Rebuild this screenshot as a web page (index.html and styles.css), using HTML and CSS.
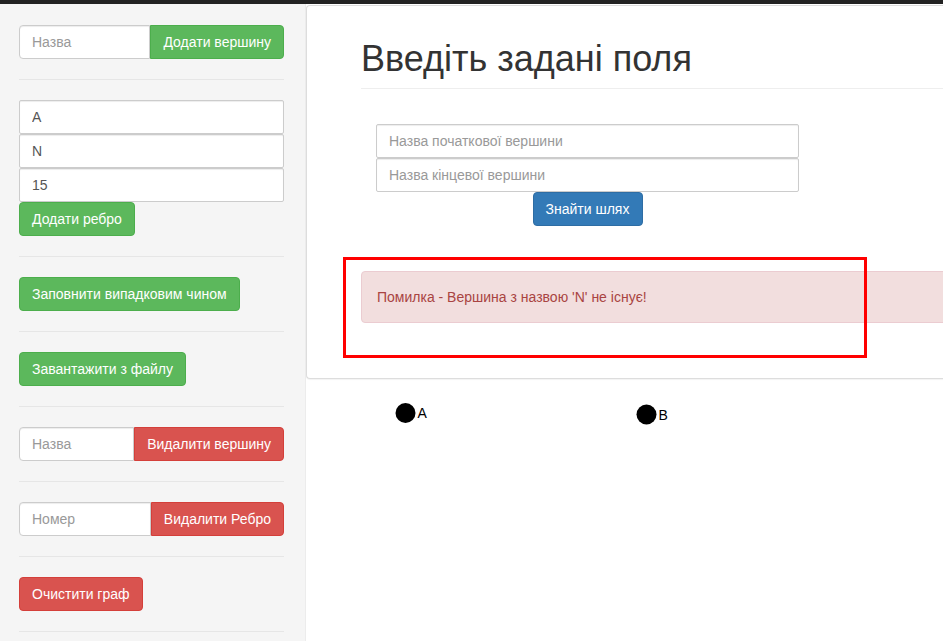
FILE: index.html
```html
<!DOCTYPE html>
<html lang="uk">
<head>
<meta charset="utf-8">
<title>Граф</title>
<link rel="stylesheet" href="styles.css">
</head>
<body>
<div class="topbar"></div>
<div class="layout">
  <aside class="sidebar">
    <div class="input-group">
      <input class="form-control" type="text" placeholder="Назва">
      <button class="btn btn-success">Додати вершину</button>
    </div>
    <hr class="divider">
    <div class="stack">
      <input class="form-control" type="text" value="A">
      <input class="form-control" type="text" value="N">
      <input class="form-control" type="text" value="15">
    </div>
    <button class="btn btn-success">Додати ребро</button>
    <hr class="divider">
    <button class="btn btn-success">Заповнити випадковим чином</button>
    <hr class="divider">
    <button class="btn btn-success">Завантажити з файлу</button>
    <hr class="divider">
    <div class="input-group">
      <input class="form-control" type="text" placeholder="Назва">
      <button class="btn btn-danger">Видалити вершину</button>
    </div>
    <hr class="divider">
    <div class="input-group">
      <input class="form-control" type="text" placeholder="Номер">
      <button class="btn btn-danger">Видалити Ребро</button>
    </div>
    <hr class="divider">
    <button class="btn btn-danger">Очистити граф</button>
    <hr class="divider">
  </aside>
  <main class="main">
    <section class="panel">
      <h1 class="page-title">Введіть задані поля</h1>
      <form class="path-form">
        <input class="form-control" type="text" placeholder="Назва початкової вершини">
        <input class="form-control" type="text" placeholder="Назва кінцевої вершини">
        <button class="btn btn-primary" type="button">Знайти шлях</button>
      </form>
      <div class="alert">Помилка - Вершина з назвою 'N' не існує!</div>
    </section>
    <svg class="graph" width="637" height="262" viewBox="0 0 637 262">
      <circle cx="99.5" cy="34" r="10" fill="#000"/>
      <text x="111.5" y="39" class="node-label">A</text>
      <circle cx="340.5" cy="35.5" r="10" fill="#000"/>
      <text x="352.5" y="41" class="node-label">B</text>
    </svg>
  </main>
</div>
<div class="highlight"></div>
</body>
</html>
```

FILE: styles.css
```css
* { box-sizing: border-box; }

html, body {
  margin: 0;
  height: 100%;
  overflow: hidden;
}

body {
  font-family: "Liberation Sans", Arial, sans-serif;
  font-size: 14px;
  line-height: 20px;
  color: #333;
  background: #fff;
  position: relative;
}

.topbar {
  height: 4px;
  background: #222;
}

.layout {
  display: flex;
  height: calc(100% - 4px);
}

.sidebar {
  width: 306px;
  flex: 0 0 306px;
  background: #f5f5f5;
  border-right: 1px solid #ececec;
  padding: 21px 21px 0 19px;
  display: flex;
  flex-direction: column;
  align-items: flex-start;
}

.divider {
  align-self: stretch;
  height: 0;
  border: 0;
  border-top: 1px solid #e6e6e6;
  margin: 20px 0;
}

.form-control {
  display: block;
  height: 34px;
  padding: 6px 12px;
  font-family: inherit;
  font-size: 14px;
  line-height: 20px;
  color: #555;
  background: #fff;
  border: 1px solid #ccc;
  border-radius: 4px;
  box-shadow: inset 0 1px 1px rgba(0, 0, 0, .075);
  margin: 0;
}

.form-control::placeholder { color: #999; }

.btn {
  display: inline-block;
  height: 34px;
  padding: 6px 12px;
  font-family: inherit;
  font-size: 14px;
  line-height: 20px;
  color: #fff;
  border: 1px solid transparent;
  border-radius: 4px;
  white-space: nowrap;
  cursor: pointer;
  margin: 0;
}

.btn-success { background: #5cb85c; border-color: #4cae4c; }
.btn-danger { background: #d9534f; border-color: #d43f3a; }
.btn-primary { background: #337ab7; border-color: #2e6da4; }

.input-group {
  align-self: stretch;
  display: flex;
}

.input-group .form-control {
  flex: 1 1 auto;
  min-width: 0;
  border-radius: 4px 0 0 4px;
}

.input-group .btn {
  flex: 0 0 auto;
  border-radius: 0 4px 4px 0;
}

.stack {
  align-self: stretch;
  display: flex;
  flex-direction: column;
}

.stack .form-control {
  width: 100%;
  border-radius: 2px;
}

.main {
  flex: 1 1 auto;
  min-width: 0;
  overflow: hidden;
  display: flex;
  flex-direction: column;
}

.panel {
  width: 760px;
  margin-top: 1px;
  background: #fff;
  border: 1px solid #ddd;
  border-right: 0;
  border-radius: 4px 0 0 4px;
  box-shadow: 0 1px 1px rgba(0, 0, 0, .05);
  padding: 0 0 55px 54px;
}

.page-title {
  margin: 33px 0 0;
  font-size: 36px;
  line-height: 40px;
  font-weight: 500;
  color: #333;
  padding-bottom: 9px;
  border-bottom: 1px solid #eee;
}

.path-form {
  margin: 35px 0 0 15px;
  width: 423px;
  display: flex;
  flex-direction: column;
  align-items: center;
}

.path-form .form-control {
  width: 100%;
  border-radius: 2px;
}

.path-form .btn {
  width: 110px;
}

.alert {
  margin-top: 45px;
  padding: 15px;
  background: #f2dede;
  border: 1px solid #ebccd1;
  border-radius: 4px;
  color: #a94442;
}

.graph {
  display: block;
  flex: 0 0 auto;
}

.node-label {
  font-family: "Liberation Sans", Arial, sans-serif;
  font-size: 14px;
  fill: #000;
}

.highlight {
  position: absolute;
  left: 343px;
  top: 257px;
  width: 524px;
  height: 101px;
  border: 3px solid #f00;
  pointer-events: none;
}
```
